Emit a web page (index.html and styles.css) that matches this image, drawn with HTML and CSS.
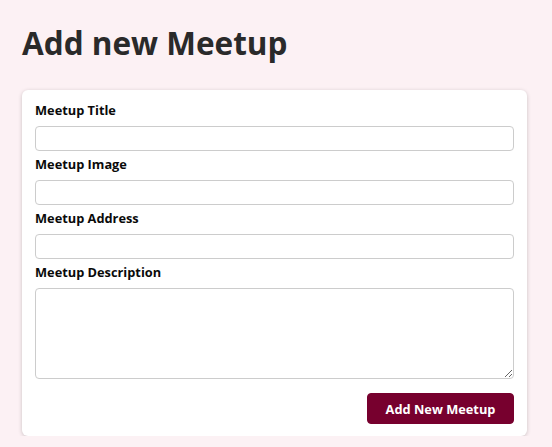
FILE: index.html
```html
<!DOCTYPE html>
<html lang="en">
<head>
<meta charset="utf-8">
<title>Add new Meetup</title>
<link rel="stylesheet" href="styles.css">
</head>
<body>
<main class="page">
  <h1 class="page-title">Add new Meetup</h1>
  <div class="card">
    <form class="form">
      <div class="control">
        <label for="title">Meetup Title</label>
        <input type="text" id="title">
      </div>
      <div class="control">
        <label for="image">Meetup Image</label>
        <input type="url" id="image">
      </div>
      <div class="control">
        <label for="address">Meetup Address</label>
        <input type="text" id="address">
      </div>
      <div class="control">
        <label for="description">Meetup Description</label>
        <textarea id="description" rows="5"></textarea>
      </div>
      <div class="actions">
        <button type="button" class="btn">Add New Meetup</button>
      </div>
    </form>
  </div>
</main>
</body>
</html>
```

FILE: styles.css
```css
* {
  box-sizing: border-box;
}

html, body {
  margin: 0;
  padding: 0;
}

body {
  background: #fcf1f4;
  font-family: "Open Sans", "DejaVu Sans", sans-serif;
  color: #222;
}

.page {
  padding: 21px 25px 0 22px;
}

.page-title {
  margin: 0 0 25px;
  font-size: 31.5px;
  line-height: 44px;
  font-weight: 700;
  color: #2a2a2a;
}

.card {
  background: #fff;
  border-radius: 6px;
  box-shadow: 0 1px 4px rgba(0, 0, 0, 0.2);
}

.form {
  padding: 11px 13px 12px;
}

.control {
  margin-bottom: 4px;
}

.control label {
  display: block;
  font-size: 12.8px;
  line-height: 18px;
  font-weight: 700;
  color: #0a0a0a;
  margin-bottom: 7px;
}

.control input,
.control textarea {
  display: block;
  width: 100%;
  font: inherit;
  font-size: 12.8px;
  padding: 3px;
  border: 1px solid #ccc;
  border-radius: 4px;
  background: #fff;
}

.control input {
  height: 25px;
}

.control textarea {
  height: 91px;
}

.actions {
  margin-top: 14px;
  display: flex;
  justify-content: flex-end;
}

.btn {
  font: inherit;
  font-size: 12.8px;
  font-weight: 700;
  line-height: 18px;
  height: 31px;
  width: 147px;
  padding: 0;
  white-space: nowrap;
  text-align: center;
  color: #fff;
  background: #77002e;
  border: 1px solid #77002e;
  border-radius: 4px;
  cursor: pointer;
}
```
